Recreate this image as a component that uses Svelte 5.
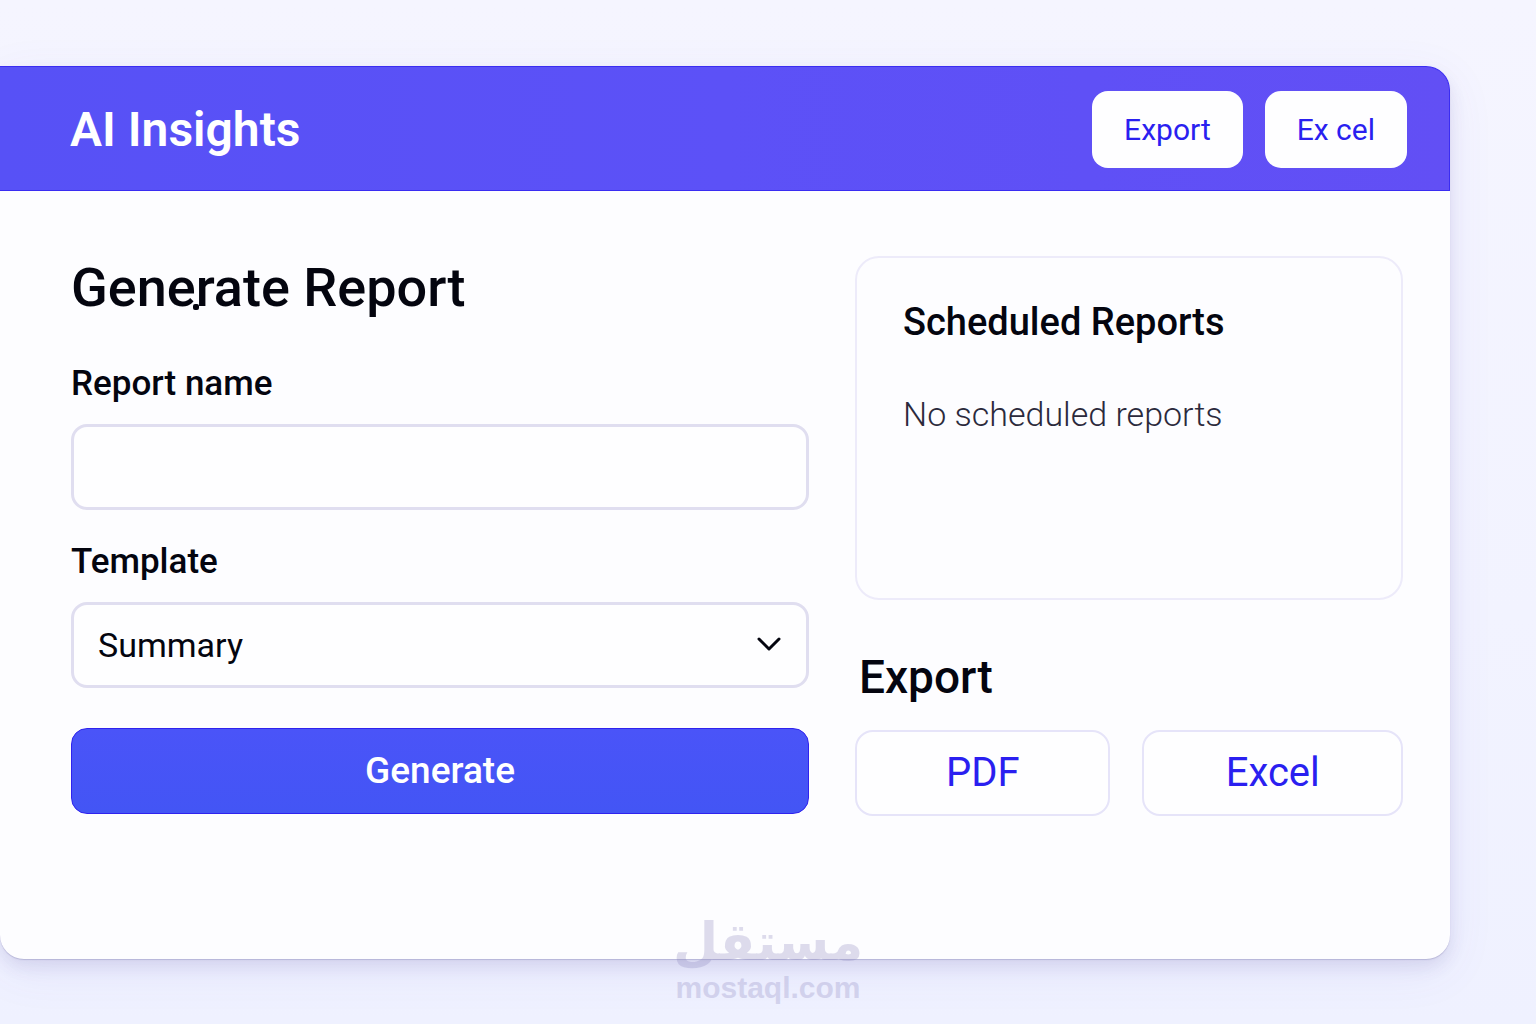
<script lang="ts">
	// Form data bindings
	let reportName: string = '';
	let template: string = 'Summary';
	let scheduledReports: string[] = [];

	const templates = ['Summary', 'Detailed', 'Financial'];

	// Add the report to the scheduled list
	const handleSubmit = () => {
		if (!reportName) return;
		scheduledReports = [...scheduledReports, `${reportName} (${template})`];
		reportName = '';
	};
</script>

<div class="page">
	<main class="window">
		<header class="header">
			<h1 class="brand">AI Insights</h1>
			<div class="header-actions">
				<button type="button" class="header-btn">Export</button>
				<button type="button" class="header-btn">Ex cel</button>
			</div>
		</header>

		<div class="content">
			<!-- Report form -->
			<form class="form" on:submit|preventDefault={handleSubmit}>
				<h2 class="title">Gene<span class="dot"></span>rate Report</h2>
				<label for="reportName" class="label">Report name</label>
				<input id="reportName" type="text" bind:value={reportName} class="field" />
				<label for="template" class="label">Template</label>
				<div class="select-wrap">
					<select id="template" bind:value={template} class="field">
						{#each templates as item}
							<option value={item}>{item}</option>
						{/each}
					</select>
					<svg class="chevron" viewBox="0 0 24 14" aria-hidden="true">
						<path d="M2 2 L12 12 L22 2" />
					</svg>
				</div>
				<button type="submit" class="submit-btn">Generate</button>
			</form>

			<!-- Scheduled reports and export -->
			<div class="side">
				<section class="card">
					<h3 class="card-title">Scheduled Reports</h3>
					{#each scheduledReports as report}
						<p class="card-text">{report}</p>
					{:else}
						<p class="card-text">No scheduled reports</p>
					{/each}
				</section>
				<h3 class="export-title">Export</h3>
				<div class="export-row">
					<button type="button" class="export-btn">PDF</button>
					<button type="button" class="export-btn">Excel</button>
				</div>
			</div>
		</div>
	</main>

	<div class="watermark">
		<span class="watermark-name" lang="ar" dir="rtl">مستقل</span>
		<span class="watermark-url">mostaql.com</span>
	</div>
</div>

<style>
	:global(body) {
		background: #f3f3ff;
	}

	.page {
		position: relative;
		box-sizing: border-box;
		min-height: 100vh;
		padding: 66px 86px 65px 0;
		background: linear-gradient(#f5f5ff, #f2f3ff 60%, #eff1ff);
		font-family: Roboto, 'Liberation Sans', sans-serif;
		color: #04050f;
		overflow: hidden;
	}

	.window {
		border-radius: 0 24px 24px 24px;
		background: #fdfdff;
		box-shadow:
			0 1px 1px rgba(80, 75, 140, 0.25),
			0 8px 16px rgba(80, 75, 140, 0.12),
			0 12px 48px rgba(90, 80, 200, 0.08);
	}

	/* Header */
	.header {
		box-sizing: border-box;
		display: flex;
		align-items: center;
		justify-content: space-between;
		height: 125px;
		padding: 2px 42px 0 70px;
		border: 1px solid #3a2cf2;
		border-left: none;
		border-radius: 0 24px 0 0;
		background: linear-gradient(90deg, #5751f6, #5c51f7 50%, #624ff5);
	}

	.brand {
		margin: 0;
		font-size: 48px;
		font-weight: 600;
		line-height: 64px;
		color: #ffffff;
	}

	.header-actions {
		display: flex;
		gap: 22px;
	}

	.header-btn {
		height: 77px;
		padding: 0 32px;
		border: none;
		border-radius: 16px;
		background: #fefeff;
		font: 400 30px/40px Roboto, sans-serif;
		color: #2a1ff0;
		cursor: pointer;
	}

	/* Content */
	.content {
		display: grid;
		grid-template-columns: 738fr 548fr;
		gap: 46px;
		padding: 65px 47px 143px 71px;
	}

	.form {
		display: flex;
		flex-direction: column;
	}

	.title {
		margin: 0 0 36px;
		font-size: 54px;
		font-weight: 500;
		line-height: 64px;
	}

	.dot {
		position: absolute;
		width: 6px;
		height: 6px;
		margin: 48px 0 0 -3px;
		border-radius: 2px;
		background: #04050f;
	}

	.label {
		margin-bottom: 12px;
		font-size: 35px;
		font-weight: 500;
		line-height: 56px;
	}

	.field {
		box-sizing: border-box;
		width: 100%;
		height: 86px;
		margin-bottom: 24px;
		padding: 0 24px;
		border: 3px solid #e0def0;
		border-radius: 16px;
		background: #fefeff;
		font: 400 34px/44px Roboto, sans-serif;
		color: #04050f;
		appearance: none;
	}

	.select-wrap {
		position: relative;
		margin-bottom: 16px;
	}

	.chevron {
		position: absolute;
		top: 35px;
		right: 28px;
		width: 24px;
		height: 14px;
		fill: none;
		stroke: #04050f;
		stroke-width: 3;
		stroke-linecap: round;
		stroke-linejoin: round;
		pointer-events: none;
	}

	.submit-btn {
		height: 86px;
		border: 1px solid #2f22ee;
		border-radius: 16px;
		background: linear-gradient(#4a54f8, #4355f5);
		font: 500 37px/44px Roboto, sans-serif;
		color: #ffffff;
		cursor: pointer;
	}

	/* Scheduled reports */
	.card {
		box-sizing: border-box;
		min-height: 344px;
		padding: 40px 46px;
		border: 2px solid #edebfa;
		border-radius: 24px;
	}

	.card-title {
		margin: 0 0 44px;
		font-size: 38px;
		font-weight: 500;
		line-height: 48px;
	}

	.card-text {
		margin: 0;
		font-size: 34px;
		font-weight: 300;
		line-height: 48px;
		color: #2b2a3c;
	}

	/* Export */
	.export-title {
		margin: 48px 4px 24px;
		font-size: 46px;
		font-weight: 500;
		line-height: 58px;
	}

	.export-row {
		display: grid;
		grid-template-columns: 255fr 260fr;
		gap: 32px;
	}

	.export-btn {
		height: 86px;
		border: 2px solid #e6e4f9;
		border-radius: 18px;
		background: #fefeff;
		font: 400 40px/48px Roboto, sans-serif;
		color: #2a1ff0;
		cursor: pointer;
	}

	/* Watermark over the bottom edge */
	.watermark {
		position: absolute;
		bottom: 18px;
		left: 0;
		right: 0;
		display: flex;
		flex-direction: column;
		align-items: center;
		color: #8c87be;
		opacity: 0.28;
		pointer-events: none;
	}

	.watermark-name {
		font-family: 'DejaVu Sans', sans-serif;
		font-size: 52px;
		font-weight: 700;
		line-height: 56px;
	}

	.watermark-url {
		font-family: 'Liberation Sans', sans-serif;
		font-size: 30px;
		font-weight: 700;
		line-height: 36px;
	}
</style>
